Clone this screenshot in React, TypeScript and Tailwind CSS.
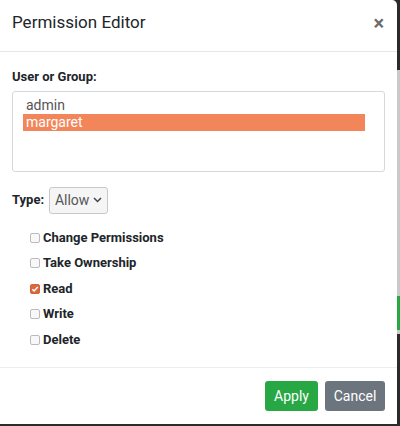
import { useState } from "react";

const USERS = ["admin", "margaret"];

const PERMS = [
  { key: "change", label: "Change Permissions" },
  { key: "owner", label: "Take Ownership" },
  { key: "read", label: "Read" },
  { key: "write", label: "Write" },
  { key: "delete", label: "Delete" },
];

export default function App() {
  const [selected, setSelected] = useState("margaret");
  const [checked, setChecked] = useState<Record<string, boolean>>({ read: true });

  return (
    <div className="flex h-[426px] w-[400px] flex-col bg-[#2b2b2b] font-['Roboto',sans-serif]">
      <div className="flex h-[424px]">
        <div className="flex w-[397px] flex-col rounded-tr-[5px] bg-white">
          {/* header */}
          <div className="flex h-[52px] items-center justify-between border-b border-[#e5e7eb] pb-[5px] pl-3 pr-[13px]">
            <h2 className="text-[17px] font-normal text-[#212529]">Permission Editor</h2>
            <button type="button" className="text-[20px] font-bold leading-none text-[#6b6b6b]">
              ×
            </button>
          </div>

          {/* body */}
          <div className="flex-1 border-b border-[#eceff2] px-3 pt-[15px]">
            <div className="text-[13px] font-bold text-[#212529]">User or Group:</div>
            <div className="mt-[4px] h-[81px] w-[373px] rounded-[3px] border border-[#d4d9de] px-[10px] pt-[5px]">
              {USERS.map((u) => (
                <div
                  key={u}
                  onClick={() => setSelected(u)}
                  className={`h-[17px] w-[342px] pl-[3px] text-[14px] leading-[17px] ${
                    selected === u ? "bg-[#f2855a] text-white" : "text-[#555]"
                  }`}
                >
                  {u}
                </div>
              ))}
            </div>

            <div className="mt-[15px] flex items-center gap-[5px]">
              <span className="text-[13px] font-bold text-[#212529]">Type:</span>
              <button
                type="button"
                className="flex h-[27px] w-[59px] items-center justify-center gap-[4px] rounded-[3px] border border-[#c8c8c8] bg-[#f5f5f5] text-[14px] text-[#555]"
              >
                Allow
                <svg width="9" height="6" viewBox="0 0 9 6" fill="none" aria-hidden>
                  <path d="M1 1l3.5 3.5L8 1" stroke="#444" strokeWidth="1.5" />
                </svg>
              </button>
            </div>

            <div className="mt-[16px] flex flex-col gap-[9.5px] pl-[18px]">
              {PERMS.map((p) => (
                <label key={p.key} className="flex h-[16px] items-center gap-[3px]">
                  <span
                    onClick={() => setChecked((c) => ({ ...c, [p.key]: !c[p.key] }))}
                    className={`flex h-[10px] w-[10px] items-center justify-center rounded-[2px] border ${
                      checked[p.key] ? "border-[#d2643a] bg-[#d9693f]" : "border-[#bbb] bg-[#f8f8f8]"
                    }`}
                  >
                    {checked[p.key] && (
                      <svg width="8" height="8" viewBox="0 0 8 8" fill="none" aria-hidden>
                        <path d="M1.3 4.2l1.8 1.8L6.8 2" stroke="white" strokeWidth="1.4" />
                      </svg>
                    )}
                  </span>
                  <span className="text-[13px] font-bold text-[#212529]">{p.label}</span>
                </label>
              ))}
            </div>
          </div>

          {/* footer */}
          <div className="flex h-[56px] items-center justify-end gap-[7px] pr-[12px]">
            <button
              type="button"
              className="h-[30px] w-[53px] rounded-[3px] bg-[#28a745] text-[14px] text-white"
            >
              Apply
            </button>
            <button
              type="button"
              className="h-[30px] w-[60px] rounded-[3px] bg-[#6c757d] text-[14px] text-white"
            >
              Cancel
            </button>
          </div>
        </div>

        {/* page behind the modal */}
        <div className="flex w-[3px] flex-col">
          <div className="h-[70px] bg-[#2b2b2b]" />
          <div className="h-[226px] bg-[#c9c9c9]" />
          <div className="h-[34px] bg-[#28a745]" />
          <div className="h-[4px] bg-[#c9c9c9]" />
          <div className="flex-1 bg-[#2b2b2b]" />
        </div>
      </div>
    </div>
  );
}
